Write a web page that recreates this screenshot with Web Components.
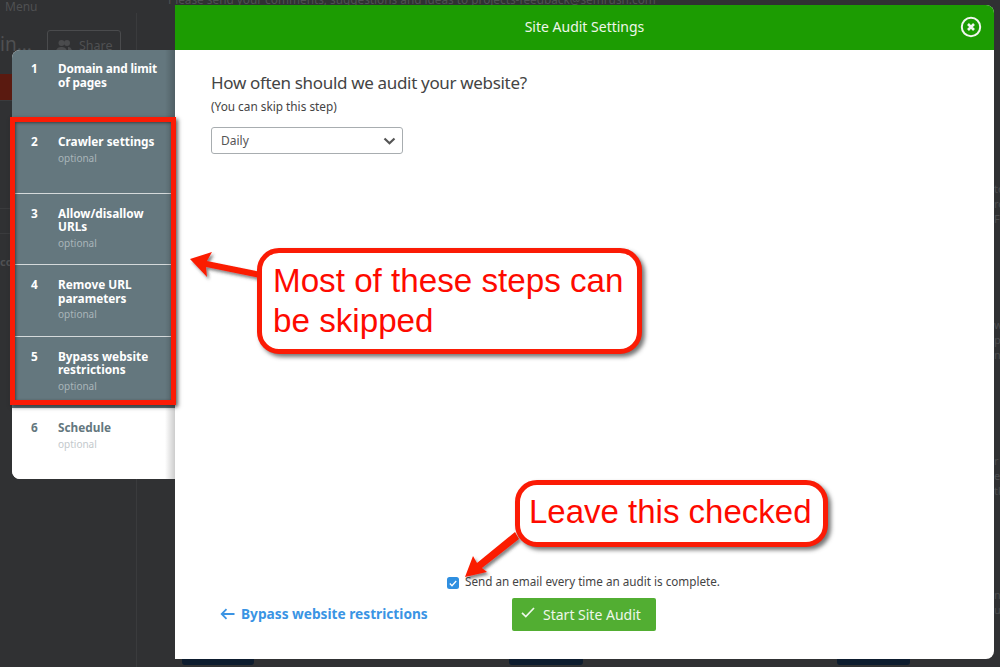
<!DOCTYPE html>
<html><head><meta charset="utf-8"><title>Site Audit Settings</title>
<style>html,body{margin:0;padding:0;background:#303133}body{width:1000px;height:667px;overflow:hidden;font-family:"Noto Sans","Open Sans",sans-serif}</style>
</head><body>
<audit-app></audit-app>
<script>
function el(name,css,html){
  customElements.define(name,class extends HTMLElement{
    constructor(){super();const r=this.attachShadow({mode:'open'});r.innerHTML='<style>'+css+'</style>'+(typeof html==='function'?html(this):html);}
  });
}
const FONT='"Noto Sans","Open Sans",sans-serif';

el('back-page',`
:host{display:block;position:absolute;inset:0;color:#4f5052;font:12px/16px ${FONT};overflow:hidden}
.menu{position:absolute;left:5px;top:-1px}
.notice{position:absolute;left:168px;top:-9px;white-space:nowrap;font-size:11.800px}
.in{position:absolute;left:0;top:31px;font-size:19px;line-height:26px}
.share{position:absolute;left:47px;top:30px;width:74px;height:32px;box-sizing:border-box;border:1px solid #4a4b4d;border-radius:3px;display:flex;align-items:center;padding-left:8px;gap:7px;font-size:12.500px}
.red{position:absolute;left:0;top:74px;width:14px;height:26px;background:#5a1a10}
.rule{position:absolute;background:#3a3b3d}
.navy{position:absolute;top:659px;height:6px;background:#0d1c2e;border-radius:0 0 3px 3px}
.edge{position:absolute;left:994px;font-size:11px;line-height:15px;color:#4d4e50}
.co{position:absolute;left:0;top:254px;font-size:11px;font-weight:700}
`,`<div class="menu">Menu</div><div class="notice">Please send your comments, suggestions and ideas to projects-feedback@semrush.com</div>
<div class="in">in...</div>
<div class="share"><svg width="16" height="14" viewBox="0 0 16 14" fill="#4a4b4d"><circle cx="5.500" cy="4" r="3"/><circle cx="11" cy="4" r="3"/><path d="M0 13c0-4 3-5 5.500-5s5.500 1 5.500 5zM12 8c2 0 4 1 4 5h-4z"/></svg>Share</div>
<div class="red"></div>
<div class="co">co</div>
<div class="rule" style="left:136px;top:13px;width:1px;height:654px"></div>
<div class="rule" style="left:0;top:100px;width:12px;height:1px"></div>
<div class="rule" style="left:0;top:208px;width:12px;height:1px"></div>
<div class="rule" style="left:0;top:233px;width:12px;height:1px"></div>
<div class="navy" style="left:182px;width:72px"></div><div class="navy" style="left:509px;width:74px"></div><div class="navy" style="left:837px;width:73px"></div>
<div class="edge" style="top:181px">to<br>ro<br>F</div><div class="edge" style="top:317px">w<br>p<br>ne</div><div class="edge" style="top:453px">r<br>ee<br>tk</div><div class="edge" style="top:587px">n<br>u</div>`);

el('step-item',`
:host{display:flex;box-sizing:border-box;height:71.500px;padding:13px 8px 0 19px;background:#64777e;color:#fff;font:700 11.800px/13.500px ${FONT};border-bottom:1.500px solid #d5dadb;white-space:nowrap}
:host([last]){border-bottom:0}
:host([plain]){background:#fff;color:#64777e;border-bottom:0;height:71px}
:host([first]){border-bottom:0;height:72px;padding-top:12px;letter-spacing:-.15px}
.n{width:27px;flex:none}
.t{flex:1}
.o{margin-top:3px;font-weight:400;font-size:10px;line-height:13px;color:#a9b5b9}
:host([plain]) .o{color:#c3c9cc}
:host([first]) .o{display:none}
`,h=>`<div class="n">${h.getAttribute('n')}</div><div class="t"><slot></slot><div class="o">optional</div></div>`);

el('step-list',`
:host{display:flex;flex-direction:column;position:absolute;left:12px;top:50px;width:163px;height:429px;border-radius:8px 0 0 8px;overflow:hidden;background:#fff}
.shade{position:absolute;right:0;top:0;bottom:0;width:10px;background:linear-gradient(90deg,rgba(0,0,0,0),rgba(0,0,0,.2))}
`,`<slot></slot><div class="shade"></div>`);

el('audit-select',`
:host{display:flex;align-items:center;justify-content:space-between;box-sizing:border-box;width:192px;height:27px;padding:0 6px 0 9px;border:1px solid #a8adb0;border-radius:3px;font:12px/16px ${FONT};color:#555}
`,`<slot></slot><svg width="13" height="8" viewBox="0 0 13 8"><path d="M1.500 1.500 6.500 6.300 11.500 1.500" fill="none" stroke="#555" stroke-width="2.200"/></svg>`);

el('close-icon',`:host{display:block;width:22px;height:22px}`,`<svg width="22" height="22" viewBox="0 0 22 22"><circle cx="11" cy="11" r="9.200" fill="none" stroke="#f2f6f0" stroke-width="2"/><path d="M8 8l6 6M14 8l-6 6" stroke="#f2f6f0" stroke-width="2.600" fill="none"/></svg>`);

el('audit-dialog',`
:host{display:flex;flex-direction:column;position:absolute;left:175px;top:5px;width:819px;height:654px;background:#fff;border-radius:0 8px 8px 0;overflow:hidden}
header{flex:none;height:45px;padding-bottom:2px;box-sizing:border-box;background:#1c9c02;color:#eef6ea;display:flex;align-items:center;justify-content:center;position:relative;font:14px/18px ${FONT}}
close-icon{position:absolute;right:12px;top:11px}
main{flex:1;display:flex;flex-direction:column;padding:20px 36px 28px;color:#444}
h2{margin:0;font:400 17px/26px ${FONT};letter-spacing:-.33px;color:#444}
.sub{font-size:11.800px;line-height:16px;margin:2px 0 13px}
.spacer{flex:1}
.mail{display:flex;align-items:center;gap:6px;margin-left:236px;font-size:11.700px;line-height:14px;height:14px}
.box{width:12px;height:12px;border-radius:2.500px;background:#2f8fe0;display:flex;align-items:center;justify-content:center;position:relative;top:2px}
.foot{display:flex;align-items:center;margin-top:10px;height:33px}
.back{display:flex;align-items:center;gap:6px;margin-left:9px;width:292px;margin-top:-2px;color:#3a94e4;font:700 13.700px/18px ${FONT}}
.go{display:flex;align-items:center;gap:8px;padding-left:9px;width:144px;height:33px;box-sizing:border-box;background:#52ae32;border-radius:2px;color:#eef7ea;font:14px/18px ${FONT}}
.go svg{position:relative;top:-2px}
`,`<header>Site Audit Settings<close-icon></close-icon></header>
<main><h2>How often should we audit your website?</h2><div class="sub">(You can skip this step)</div>
<audit-select>Daily</audit-select><div class="spacer"></div>
<div class="mail"><span class="box"><svg width="8" height="7" viewBox="0 0 8 7"><path d="M.8 3.500 3 5.700 7.200 1" fill="none" stroke="#fff" stroke-width="1.300"/></svg></span><span>Send an email every time an audit is complete.</span></div>
<div class="foot"><div class="back"><svg width="15" height="12" viewBox="0 0 15 12"><path d="M14.500 6H2M6.500 1.200 1.700 6l4.800 4.800" fill="none" stroke="#3a94e4" stroke-width="1.800"/></svg><span>Bypass website restrictions</span></div>
<div class="go"><svg width="14" height="11" viewBox="0 0 14 11"><path d="M1 5.800 4.800 9.500 13 1" fill="none" stroke="#eef7ea" stroke-width="1.700"/></svg><span>Start Site Audit</span></div></div></main>`);

el('call-out',`
:host{display:block;position:absolute;box-sizing:border-box;background:#fff;border:5px solid #fb1b05;border-radius:22px;box-shadow:3px 3px 4px rgba(60,60,60,.7);color:#fe0a00;font:33.200px/40px "Liberation Sans",Arial,sans-serif}
`,`<slot></slot>`);

el('audit-app',`
:host{display:block;position:relative;width:1000px;height:667px;overflow:hidden;background:#303133}
.frame{position:absolute;left:10px;top:117px;width:166px;height:288px;box-sizing:border-box;border:5px solid #fb1b05;box-shadow:2px 2px 4px rgba(30,30,30,.7),inset 1px 1px 3px rgba(30,30,30,.6)}
svg.a{position:absolute;left:0;top:0;overflow:visible}
`,`<back-page></back-page>
<step-list>
<step-item n="1" first>Domain and limit<br>of pages</step-item>
<step-item n="2">Crawler settings</step-item>
<step-item n="3">Allow/disallow<br>URLs</step-item>
<step-item n="4">Remove URL<br>parameters</step-item>
<step-item n="5" last>Bypass website<br>restrictions</step-item>
<step-item n="6" plain>Schedule</step-item>
</step-list>
<audit-dialog></audit-dialog>
<div class="frame"></div>
<svg class="a" width="1000" height="667"><defs><filter id="s" x="-20%" y="-20%" width="140%" height="140%"><feDropShadow dx="2" dy="2.500" stdDeviation="1.500" flood-color="#333" flood-opacity=".6"/></filter></defs>
<g fill="#fb1b05" filter="url(#s)">
<path d="M190 259 212 252 207 261 261 272 260 278 206 267 207 277z"/>
<path d="M465 577 473 556 477 563 515 532 519 539 482 568 487 572z"/></g></svg>
<call-out style="left:257px;top:248px;width:385px;height:106px;padding:8px 0 0 11px;">Most of these steps can<br>be skipped</call-out>
<call-out style="left:515px;top:480px;width:313px;height:67px;padding:7px 0 0 9px;font-size:33px;">Leave this checked</call-out>`);
</script>
</body></html>
